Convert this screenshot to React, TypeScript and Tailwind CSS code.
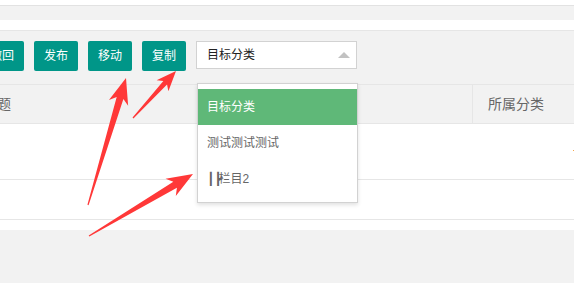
import React from 'react'

type Pt = [number, number]

// tapered red annotation arrow, tail -> tip
function arrowPoints(tail: Pt, tip: Pt, head: number, hw: number, sw: number) {
  const dx = tip[0] - tail[0]
  const dy = tip[1] - tail[1]
  const len = Math.hypot(dx, dy)
  const ux = dx / len
  const uy = dy / len
  const nx = -uy
  const ny = ux
  const bx = tip[0] - ux * head
  const by = tip[1] - uy * head
  const nb = tip[0] - ux * head * 0.8
  const nby = tip[1] - uy * head * 0.8
  const pts: Pt[] = [
    [tail[0] + nx * 0.6, tail[1] + ny * 0.6],
    [nb + nx * sw, nby + ny * sw],
    [bx + nx * hw, by + ny * hw],
    tip,
    [bx - nx * hw, by - ny * hw],
    [nb - nx * sw, nby - ny * sw],
    [tail[0] - nx * 0.6, tail[1] - ny * 0.6]
  ]
  return pts.map((p) => p.join(',')).join(' ')
}

const font = { fontFamily: '"Helvetica Neue", Helvetica, "Liberation Sans", "Noto Sans CJK SC", sans-serif' }

function Btn({ label }: { label: string }) {
  return (
    <button className="h-[30px] w-[44px] shrink-0 rounded-[2px] bg-[#009688] text-[12px] leading-[30px] text-white">
      {label}
    </button>
  )
}

export default function App() {
  return (
    <div className="relative h-[283px] w-[574px] overflow-hidden bg-[#f2f2f2]" style={font}>
      <div className="h-[6px] border-b border-[#e2e2e2] bg-white" />
      <div className="h-[14px]" />
      <div className="h-[11px] border-b border-[#e6e6e6] bg-white" />

      {/* toolbar */}
      <div className="ml-[-20px] flex h-[53px] items-start gap-[10px] pt-[10px]">
        <Btn label="撤回" />
        <Btn label="发布" />
        <Btn label="移动" />
        <Btn label="复制" />
        <div className="relative">
          <div className="flex h-[28px] w-[161px] items-center border border-[#d2d2d2] bg-white pl-[10px] text-[12px] text-[#222]">
            目标分类
            <span className="absolute right-[7px] top-[11px] h-0 w-0 border-x-[6px] border-b-[6px] border-x-transparent border-b-[#c2c2c2]" />
          </div>
          <div className="absolute left-[1px] top-[42px] z-10 w-[161px] border border-[#d2d2d2] bg-white py-[5px] text-[12px] shadow-[0_2px_4px_rgba(0,0,0,0.12)]">
            <div className="flex h-[36px] items-center bg-[#5FB878] pl-[9px] text-white">目标分类</div>
            <div className="flex h-[36px] items-center pl-[9px] text-[#666]">测试测试测试</div>
            <div className="flex h-[36px] items-center pl-[9px] text-[#666]">
              <span className="mr-[-3px]" style={{ fontFamily: '"DejaVu Sans Mono", monospace' }}>┃┣</span>
              <span>栏目2</span>
            </div>
          </div>
        </div>
      </div>

      {/* table */}
      <div className="bg-white pb-[10px]">
        <div className="flex h-[40px] border-y border-[#e6e6e6] bg-[#f2f2f2] text-[14px] text-[#666]">
          <div className="ml-[-17px] flex w-[490px] items-center border-r border-[#e6e6e6]">标题</div>
          <div className="flex items-center pl-[15px]">所属分类</div>
        </div>
        <div className="relative h-[56px] border-b border-[#e6e6e6]">
          <span className="absolute right-0 top-[26px] h-[1px] w-[1px] bg-[#f5a54b]" />
        </div>
        <div className="h-[40px] border-b border-[#e6e6e6]" />
      </div>

      {/* annotation arrows */}
      <svg className="pointer-events-none absolute inset-0 z-20" width="574" height="283">
        <polygon points={arrowPoints([88, 205], [126, 78], 26, 10, 3.5)} fill="#ff3838" />
        <polygon points={arrowPoints([133, 118], [176, 71], 20, 8, 2.5)} fill="#ff3838" />
        <polygon points={arrowPoints([89, 236], [193, 174], 26, 10, 3.5)} fill="#ff3838" />
      </svg>
    </div>
  )
}
